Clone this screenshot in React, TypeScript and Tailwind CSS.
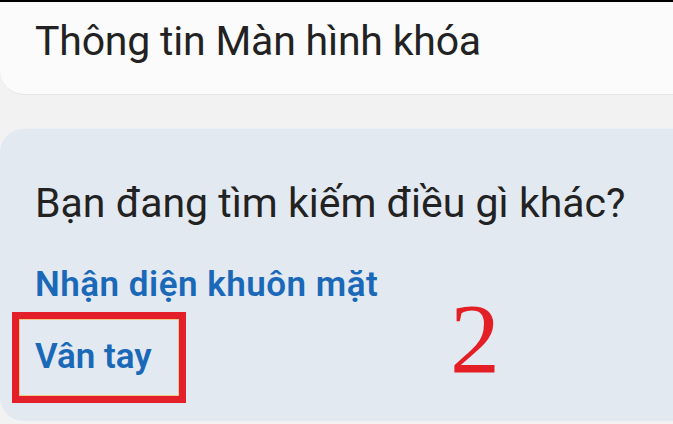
import React from "react";

export default function App() {
  return (
    <div
      className="relative w-[673px] h-[424px] overflow-hidden bg-[#f2f2f2] flex flex-col"
      style={{ fontFamily: "Roboto, 'Noto Sans', sans-serif" }}
    >
      <div className="h-[2px] bg-black shrink-0" />
      <div className="h-[93px] shrink-0 bg-[#fbfbfb] rounded-bl-[24px] border-b border-[#e6e6e6] pl-[35px] pt-[19px]">
        <div className="text-[41px] leading-[41px] text-[#222222] tracking-[-0.2px]">
          Thông tin Màn hình khóa
        </div>
      </div>
      <div className="h-[33px] shrink-0" />
      <div className="flex-1 mb-[3px] bg-[#e3e9f0] rounded-l-[24px] border-t border-[#edf1f5] pl-[35px] pt-[54px] flex flex-col">
        <div className="text-[41px] leading-[41px] text-[#222222]">
          Bạn đang tìm kiếm điều gì khác?
        </div>
        <div className="mt-[43px] text-[35px] leading-[35px] font-semibold text-[#1a68b8] tracking-[0.5px]">
          Nhận diện khuôn mặt
        </div>
        <div className="mt-[37px] text-[35px] leading-[35px] font-semibold text-[#1a68b8]">
          Vân tay
        </div>
      </div>
      <div className="absolute left-[12px] top-[312px] w-[174px] h-[91px] border-[7px] border-[#e3202a] shadow-[inset_0_0_0_1px_#f6c88a]" />
      <div
        className="absolute left-[450px] top-[289px] text-[100px] leading-[100px] text-[#e31e24]"
        style={{ fontFamily: "'Liberation Serif', serif" }}
      >
        2
      </div>
    </div>
  );
}
